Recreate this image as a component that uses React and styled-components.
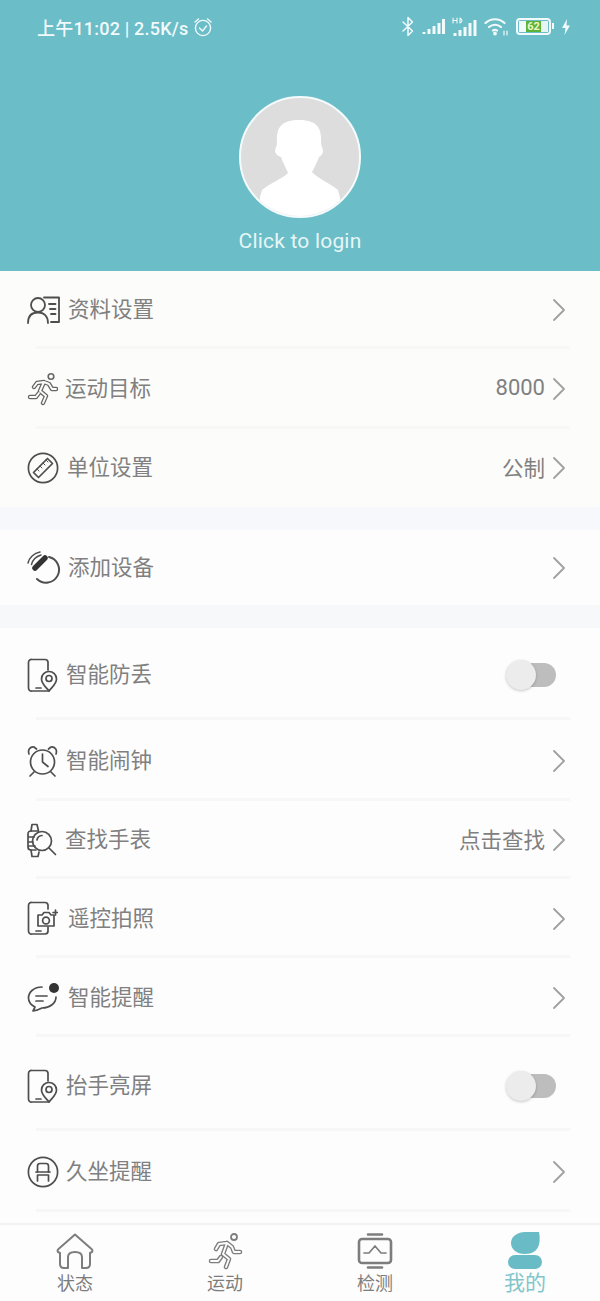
import React from "react";
import styled, { createGlobalStyle } from "styled-components";

const GlobalStyle = createGlobalStyle`
  html, body {
    margin: 0;
    padding: 0;
    background: #fdfdfe;
    font-family: "Noto Sans CJK SC", "Roboto", sans-serif;
  }
`;

const INK = "#4e4e4e";
const STATUS = "#f2fafb";

const Svg = ({ w, h, children, stroke = INK, sw = 1.7 }) => (
  <svg
    width={w}
    height={h}
    viewBox={`0 0 ${w} ${h}`}
    fill="none"
    stroke={stroke}
    strokeWidth={sw}
    strokeLinecap="round"
    strokeLinejoin="round"
  >
    {children}
  </svg>
);

// the runner is a hollow outline: a thick line with a thinner pale one over it
const RUNNER_BODY =
  "M17 10 L10 11 L7 15 M17 10 L22 12 L25 17 L29 17 M17 10 L13 19 L19 24 L16 31 M12 21 L9 25 L3 25";

const RunIcon = () => (
  <Svg w={31} h={34} stroke="#666" sw={4.4}>
    <path d={RUNNER_BODY} />
    <path d={RUNNER_BODY} stroke="#fcfcfb" strokeWidth="1.9" />
    <circle cx="24" cy="4.5" r="2.8" strokeWidth="1.6" />
  </Svg>
);

const TAB_RUNNER_BODY =
  "M19 11 L11 12 L8 17 M19 11 L24 15 L26 20 L32 20 M19 11 L15 22 L21 27 L18 35 M13 25 L10 29 L3 29";

const TabRunIcon = () => (
  <Svg w={35} h={38} stroke="#7d7d7d" sw={4.6}>
    <path d={TAB_RUNNER_BODY} />
    <path d={TAB_RUNNER_BODY} stroke="#fdfdfd" strokeWidth="1.9" />
    <circle cx="26" cy="5" r="3" strokeWidth="1.8" />
  </Svg>
);

const ProfileIcon = () => (
  <Svg w={34} h={28} sw={1.8}>
    <circle cx="11" cy="9" r="7" />
    <path d="M1 27 C1 20 5 16.5 11 16.5 C17 16.5 21 20 21 27" />
    <path d="M17 1.5 H32 V26 H24 M22 8 H28.5 M23 13 H28.5 M24 18 H28.5" />
  </Svg>
);

const RulerIcon = () => (
  <Svg w={32} h={32}>
    <circle cx="16" cy="16" r="14.6" />
    <path d="M6.5 20.5 L20.5 6.5 L25.5 11.5 L11.5 25.5 Z" />
    <path d="M10 17 L12 19 M13 14 L15 16 M16 11 L18 13 M19 8 L21 10" strokeWidth="1" />
  </Svg>
);

const DeviceIcon = () => (
  <Svg w={34} h={34}>
    <path d="M22 6 A13 13 0 1 1 10 28" strokeWidth="2" />
    <path d="M8 17 L18 7" strokeWidth="5.5" stroke="#333" />
    <path d="M1 12 C2 7 7 2 13 1 M4.5 13.5 C5.5 9.5 9 5.5 14 4" strokeWidth="1.5" />
  </Svg>
);

const PhonePinIcon = () => (
  <Svg w={31} h={35}>
    <path d="M21 12 V4 A3 3 0 0 0 18 1.5 H5 A3 3 0 0 0 1.5 4.5 V30 A3 3 0 0 0 5 33 H18 L22 33" />
    <path d="M9 30 H14" />
    <path d="M22 33 C19 29 14.5 26 14.5 21 A7.5 7.5 0 0 1 29.5 21 C29.5 26 25 29 22 33 Z" />
    <circle cx="22" cy="20.5" r="3" />
  </Svg>
);

const AlarmIcon = () => (
  <Svg w={31} h={32}>
    <circle cx="15.5" cy="17" r="12" />
    <path d="M15.5 9 V17 L21 21.5" />
    <path d="M2 9 C0.5 5 3 1.5 7 2 L9.5 4 M29 9 C30.5 5 28 1.5 24 2 L21.5 4" />
    <path d="M7 27 L3 31 M24 27 L28 31" />
  </Svg>
);

const WatchSearchIcon = () => (
  <Svg w={30} h={35}>
    <path d="M4 8 L5 1.5 H10 L11.5 8 M4 27 L5 33.5 H11 L12 29" />
    <path d="M11 8 H4 Q1 8 1 11 V24 Q1 27 4 27 H9 M1 14 H7 M1 19 H6 M1 23 H8" />
    <circle cx="15" cy="18" r="9.5" />
    <path d="M10 17 A5.5 5.5 0 0 1 15 12.5" />
    <path d="M22 25 L28.5 31.5" />
  </Svg>
);

const PhoneCameraIcon = () => (
  <Svg w={31} h={35}>
    <path d="M21 8 V4 A3 3 0 0 0 18 1.5 H5 A3 3 0 0 0 1.5 4.5 V30 A3 3 0 0 0 5 33 H18 A3 3 0 0 0 21 30 V26" />
    <path d="M9 30 H14" />
    <path d="M11 14 H15 L17 11.5 H22 L24 14 H27 V25 H11 Z" />
    <circle cx="19" cy="19.5" r="3.4" />
    <path d="M28.5 9 V14 M26 11.5 H30.5" />
  </Svg>
);

const ChatIcon = () => (
  <Svg w={33} h={30}>
    <path d="M15 4 C7 4 1.5 9 1.5 15 C1.5 19 4 22 8 24 L6 28 C10 27.5 13 26 15 25 C23 25 29 20 29 14" />
    <path d="M9 13 H20 M9 18 H16" />
    <circle cx="27" cy="5" r="5" fill="#333" stroke="none" />
  </Svg>
);

const SeatIcon = () => (
  <Svg w={32} h={32}>
    <circle cx="16" cy="16" r="14.6" />
    <path d="M10.5 16 V10 Q10.5 7.5 13 7.5 H19 Q21.5 7.5 21.5 10 V16" />
    <path d="M9 16 H23 M10.5 19 H21.5 M10.5 19 V25 M21.5 19 V25" />
  </Svg>
);

const ChevronIcon = () => (
  <Svg w={14} h={24} stroke="#a0a0a0" sw={1.8}>
    <path d="M2 2 L12 12 L2 22" />
  </Svg>
);

const HomeIcon = () => (
  <Svg w={38} h={36} stroke="#7d7d7d" sw={2}>
    <path d="M8 35 Q4 35 4 31 V20 L2 19 Q1 17 2.5 16 L19 1.5 L35.5 16 Q37 17 36 19 L34 20 V31 Q34 35 30 35 H26 V24 Q26 19 19 19 Q12 19 12 24 V35 Z" />
  </Svg>
);

const MonitorIcon = () => (
  <Svg w={36} h={36} stroke="#7d7d7d" sw={2.6}>
    <rect x="2" y="6" width="32" height="24" rx="3" />
    <path d="M11 1.5 H25 M11 34.5 H25" />
    <path d="M7 20 H12 L18 13 L24 20 H29" strokeWidth="1.7" />
  </Svg>
);

const MineIcon = () => (
  <svg width="34" height="37" viewBox="0 0 34 37" fill="#69bcc6">
    <path d="M31 0 C33 11 31 22 17 22 C8 22 3 17 3 11 C3 4 10 0 17 0 Z" />
    <rect x="0" y="23" width="34" height="14" rx="7" />
  </svg>
);

const Page = styled.div`
  width: 600px;
  height: 1301px;
  overflow: hidden;
  display: flex;
  flex-direction: column;
  background: #fdfdfe;
`;

const Header = styled.header`
  height: 271px;
  background: #6bbdc8;
  display: flex;
  flex-direction: column;
  align-items: center;
  flex-shrink: 0;
`;

const StatusBar = styled.div`
  align-self: stretch;
  height: 53px;
  padding: 0 29px 0 37px;
  display: flex;
  align-items: center;
  justify-content: space-between;
  color: ${STATUS};
  box-sizing: border-box;
`;

const StatusLeft = styled.div`
  display: flex;
  align-items: center;
  gap: 5px;
  font-size: 18px;
  font-family: "Roboto", "Noto Sans CJK SC", sans-serif;
  font-weight: 500;
  letter-spacing: 0.2px;
  white-space: nowrap;
`;

const StatusRight = styled.div`
  display: flex;
  align-items: center;
  gap: 7px;
`;

const Battery = styled.div`
  width: 35px;
  height: 17px;
  box-sizing: border-box;
  border: 2px solid ${STATUS};
  border-radius: 4px;
  position: relative;
  margin-right: 3px;
  padding: 1px;
  display: flex;
  &::after {
    content: "";
    position: absolute;
    right: -5px;
    top: 3px;
    width: 2px;
    height: 6px;
    background: ${STATUS};
  }
`;

const BatteryFill = styled.div`
  flex: 1;
  display: flex;
  align-items: center;
  justify-content: center;
  font-family: "Roboto", sans-serif;
  font-size: 11px;
  font-weight: 700;
  line-height: 11px;
  color: #eef7c8;
  background: linear-gradient(90deg, #f2fafb 0 24%, #5cb338 24% 76%, #e6f4f5 76%);
`;

const Avatar = styled.div`
  margin-top: 43px;
  width: 122px;
  height: 122px;
  border-radius: 50%;
  border: 2px solid #f4fbfc;
  box-sizing: border-box;
  overflow: hidden;
  background: #dddddd;
  flex-shrink: 0;
`;

const LoginText = styled.div`
  margin-top: 9px;
  font-family: "Roboto", sans-serif;
  font-size: 21px;
  line-height: 28px;
  color: #e6f6f6;
  letter-spacing: 0.2px;
`;

const Group = styled.section`
  background: ${(p) => p.$bg || "#fdfdfe"};
  flex-shrink: 0;
`;

const Band = styled.div`
  height: ${(p) => p.$h}px;
  background: ${(p) => p.$bg || "#f7f8fb"};
  flex-shrink: 0;
`;

const Row = styled.div`
  height: ${(p) => p.$h}px;
  box-sizing: border-box;
  padding: ${(p) => p.$top || 0}px 34px 0 27px;
  display: flex;
  align-items: center;
  position: relative;
  &::after {
    content: "";
    display: ${(p) => (p.$last ? "none" : "block")};
    position: absolute;
    left: 36px;
    right: 30px;
    bottom: 0;
    height: 3px;
    background: #f7f7f7;
  }
`;

const IconSlot = styled.div`
  width: ${(p) => p.$w}px;
  flex-shrink: 0;
  display: flex;
  align-items: center;
`;

const Label = styled.div`
  font-size: 21.5px;
  line-height: 30px;
  padding-bottom: 4px;
  color: #808080;
  flex: 1;
`;

const Value = styled.div`
  font-size: ${(p) => (p.$num ? 22 : 21.5)}px;
  line-height: 30px;
  padding-bottom: 2px;
  color: #808080;
  margin-right: 7px;
  font-family: ${(p) => (p.$num ? '"Roboto", sans-serif' : "inherit")};
`;

const Toggle = styled.div`
  width: 50px;
  height: 24px;
  position: relative;
  margin-right: 10px;
  border-radius: 12px;
  background: linear-gradient(90deg, #e9e9e9 0 50%, #bdbdbd 50%);
  &::before {
    content: "";
    position: absolute;
    left: 0;
    top: -3px;
    width: 30px;
    height: 30px;
    border-radius: 50%;
    background: #ececec;
    box-shadow: 0 1px 3px rgba(0, 0, 0, 0.22);
  }
`;

const TabBar = styled.nav`
  flex: 1;
  display: grid;
  grid-template-columns: repeat(4, 1fr);
  background: #fdfdfd;
  border-top: 2px solid #f2f2f3;
  margin-top: 11px;
`;

const Tab = styled.div`
  display: flex;
  flex-direction: column;
  align-items: center;
  padding-top: 6px;
  height: 75px;
  box-sizing: border-box;
`;

const TabIcon = styled.div`
  height: 39px;
  display: flex;
  align-items: center;
`;

const TabLabel = styled.div`
  font-size: ${(p) => (p.$active ? 21 : 18)}px;
  line-height: 26px;
  margin-top: ${(p) => (p.$active ? -2 : -1)}px;
  color: ${(p) => (p.$active ? "#82c6cc" : "#7d7d7d")};
`;

const firstGroup = [
  { icon: <ProfileIcon />, w: 41, label: "资料设置", h: 78 },
  { icon: <RunIcon />, w: 38, label: "运动目标", value: "8000", num: true, h: 80 },
  { icon: <RulerIcon />, w: 40, label: "单位设置", value: "公制", h: 78, last: true },
];

const thirdGroup = [
  { icon: <PhonePinIcon />, w: 39, label: "智能防丢", toggle: true, h: 92, top: 2 },
  { icon: <AlarmIcon />, w: 39, label: "智能闹钟", h: 81 },
  { icon: <WatchSearchIcon />, w: 38, label: "查找手表", value: "点击查找", h: 78 },
  { icon: <PhoneCameraIcon />, w: 41, label: "遥控拍照", h: 79 },
  { icon: <ChatIcon />, w: 41, label: "智能提醒", h: 79 },
  { icon: <PhonePinIcon />, w: 39, label: "抬手亮屏", toggle: true, h: 94, top: 4 },
  { icon: <SeatIcon />, w: 39, label: "久坐提醒", h: 81 },
];

const tabs = [
  { icon: <HomeIcon />, label: "状态" },
  { icon: <TabRunIcon />, label: "运动" },
  { icon: <MonitorIcon />, label: "检测" },
  { icon: <MineIcon />, label: "我的", active: true },
];

const SettingRow = ({ icon, w, label, value, num, toggle, h, top, last }) => (
  <Row $h={h} $top={top} $last={last}>
    <IconSlot $w={w}>{icon}</IconSlot>
    <Label>{label}</Label>
    {value && <Value $num={num}>{value}</Value>}
    {toggle ? <Toggle /> : <ChevronIcon />}
  </Row>
);

export default function App() {
  return (
    <Page>
      <GlobalStyle />
      <Header>
        <StatusBar>
          <StatusLeft>
            上午11:02 | 2.5K/s
            <Svg w={20} h={20} stroke={STATUS} sw={1.4}>
              <circle cx="10" cy="11" r="7.6" />
              <path d="M6.5 11 L9.5 14 L13.5 9 M2 5 L5.5 2 M18 5 L14.5 2" />
            </Svg>
          </StatusLeft>
          <StatusRight>
            <Svg w={14} h={21} stroke={STATUS} sw={1.5}>
              <path d="M2 6 L11.5 15 L7 19.5 V1.5 L11.5 6 L2 15" />
            </Svg>
            <Svg w={23} h={17} stroke={STATUS} sw={3}>
              <path d="M2 16 V14 M7 16 V11 M12 16 V8 M17 16 V5 M21.5 16 V1" strokeLinecap="butt" />
            </Svg>
            <Svg w={25} h={20} stroke={STATUS} sw={3}>
              <path d="M3 19 V16 M8 19 V13 M13 19 V10 M18 19 V6 M23 19 V3" strokeLinecap="butt" />
              <path d="M1 1 V6 M5 1 V6 M1 3.5 H5 M8 1 V6 M8 1 Q12 3.5 8 6" strokeWidth="1.1" />
            </Svg>
            <Svg w={25} h={19} stroke={STATUS} sw={2.2}>
              <path d="M1.5 6 C7 1 15 1 20.5 6 M5 10 C8.5 7 13.5 7 17 10 M9 13.5 C10 12.5 12 12.5 13 13.5" />
              <circle cx="11" cy="16.5" r="0.8" />
              <path d="M20 14 V18 M23 14 V18" strokeWidth="1.2" />
            </Svg>
            <Battery>
              <BatteryFill>62</BatteryFill>
            </Battery>
            <Svg w={10} h={16} stroke="none">
              <path d="M6 0 L1 9 H4.5 L3.5 16 L9 6.5 H5.5 Z" fill={STATUS} />
            </Svg>
          </StatusRight>
        </StatusBar>
        <Avatar>
          <svg width="118" height="118" viewBox="0 0 118 118">
            <path
              d="M34 52 C35 49 36 47 36 44 C35 28 42 22 58 22 C74 22 81 28 80 44 C80 47 81 49 82 52 C82 56 80 58 78 59 C76 65 73 70 71 74 C76 80 90 86 97 92 L99 100 L100 118 H18 L19 99 L21 92 C28 86 42 80 47 75 C45 70 42 65 40 59 C37 58 34 56 34 52 Z"
              fill="#ffffff"
            />
          </svg>
        </Avatar>
        <LoginText>Click to login</LoginText>
      </Header>
      <Group $bg="#fcfcfb">
        {firstGroup.map((r) => (
          <SettingRow key={r.label} {...r} />
        ))}
      </Group>
      <Band $h={23} />
      <Group>
        <SettingRow icon={<DeviceIcon />} w={41} label="添加设备" h={75} last />
      </Group>
      <Band $h={23} $bg="#f6f8f9" />
      <Group>
        {thirdGroup.map((r) => (
          <SettingRow key={r.label} {...r} />
        ))}
      </Group>
      <TabBar>
        {tabs.map((t) => (
          <Tab key={t.label}>
            <TabIcon>{t.icon}</TabIcon>
            <TabLabel $active={t.active}>{t.label}</TabLabel>
          </Tab>
        ))}
      </TabBar>
    </Page>
  );
}
